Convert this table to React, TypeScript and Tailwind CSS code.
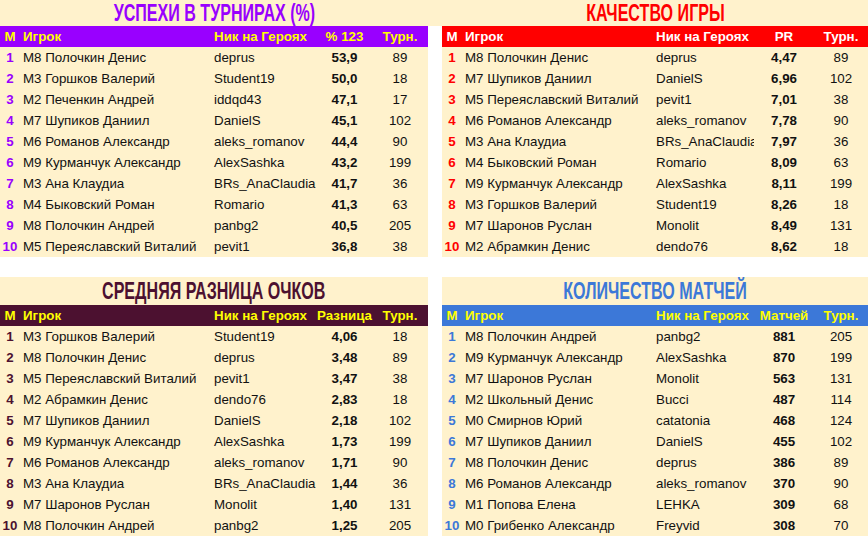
import React from 'react';

type Row = [string, string, string, string];

interface TableDef {
  title: string;
  valueHeader: string;
  titleColor: string;
  headBg: string;
  headText: string;
  rankColor: string;
  cols: string;
  rows: Row[];
}

const LEFT_COLS = 'grid-cols-[20px_191px_106px_55px_56px]';
const RIGHT_COLS = 'grid-cols-[20px_191px_101px_60px_54px]';

const success: TableDef = {
  title: 'УСПЕХИ В ТУРНИРАХ (%)',
  valueHeader: '% 123',
  titleColor: 'text-[#9900ff]',
  headBg: 'bg-[#9900ff]',
  headText: 'text-[#ffff00]',
  rankColor: 'text-[#9900ff]',
  cols: LEFT_COLS,
  rows: [
    ['М8 Полочкин Денис', 'deprus', '53,9', '89'],
    ['М3 Горшков Валерий', 'Student19', '50,0', '18'],
    ['М2 Печенкин Андрей', 'iddqd43', '47,1', '17'],
    ['М7 Шупиков Даниил', 'DanielS', '45,1', '102'],
    ['М6 Романов Александр', 'aleks_romanov', '44,4', '90'],
    ['М9 Курманчук Александр', 'AlexSashka', '43,2', '199'],
    ['М3 Ана Клаудиа', 'BRs_AnaClaudia', '41,7', '36'],
    ['М4 Быковский Роман', 'Romario', '41,3', '63'],
    ['М8 Полочкин Андрей', 'panbg2', '40,5', '205'],
    ['М5 Переяславский Виталий', 'pevit1', '36,8', '38'],
  ],
};

const quality: TableDef = {
  title: 'КАЧЕСТВО ИГРЫ',
  valueHeader: 'PR',
  titleColor: 'text-[#ff0000]',
  headBg: 'bg-[#ff0000]',
  headText: 'text-white',
  rankColor: 'text-[#ff0000]',
  cols: RIGHT_COLS,
  rows: [
    ['М8 Полочкин Денис', 'deprus', '4,47', '89'],
    ['М7 Шупиков Даниил', 'DanielS', '6,96', '102'],
    ['М5 Переяславский Виталий', 'pevit1', '7,01', '38'],
    ['М6 Романов Александр', 'aleks_romanov', '7,78', '90'],
    ['М3 Ана Клаудиа', 'BRs_AnaClaudia', '7,97', '36'],
    ['М4 Быковский Роман', 'Romario', '8,09', '63'],
    ['М9 Курманчук Александр', 'AlexSashka', '8,11', '199'],
    ['М3 Горшков Валерий', 'Student19', '8,26', '18'],
    ['М7 Шаронов Руслан', 'Monolit', '8,49', '131'],
    ['М2 Абрамкин Денис', 'dendo76', '8,62', '18'],
  ],
};

const diff: TableDef = {
  title: 'СРЕДНЯЯ РАЗНИЦА ОЧКОВ',
  valueHeader: 'Разница',
  titleColor: 'text-[#4c1130]',
  headBg: 'bg-[#4c1130]',
  headText: 'text-[#ffff00]',
  rankColor: 'text-[#4c1130]',
  cols: LEFT_COLS,
  rows: [
    ['М3 Горшков Валерий', 'Student19', '4,06', '18'],
    ['М8 Полочкин Денис', 'deprus', '3,48', '89'],
    ['М5 Переяславский Виталий', 'pevit1', '3,47', '38'],
    ['М2 Абрамкин Денис', 'dendo76', '2,83', '18'],
    ['М7 Шупиков Даниил', 'DanielS', '2,18', '102'],
    ['М9 Курманчук Александр', 'AlexSashka', '1,73', '199'],
    ['М6 Романов Александр', 'aleks_romanov', '1,71', '90'],
    ['М3 Ана Клаудиа', 'BRs_AnaClaudia', '1,44', '36'],
    ['М7 Шаронов Руслан', 'Monolit', '1,40', '131'],
    ['М8 Полочкин Андрей', 'panbg2', '1,25', '205'],
  ],
};

const matches: TableDef = {
  title: 'КОЛИЧЕСТВО МАТЧЕЙ',
  valueHeader: 'Матчей',
  titleColor: 'text-[#3c78d8]',
  headBg: 'bg-[#3c78d8]',
  headText: 'text-[#ffff00]',
  rankColor: 'text-[#3c78d8]',
  cols: RIGHT_COLS,
  rows: [
    ['М8 Полочкин Андрей', 'panbg2', '881', '205'],
    ['М9 Курманчук Александр', 'AlexSashka', '870', '199'],
    ['М7 Шаронов Руслан', 'Monolit', '563', '131'],
    ['М2 Школьный Денис', 'Bucci', '487', '114'],
    ['М0 Смирнов Юрий', 'catatonia', '468', '124'],
    ['М7 Шупиков Даниил', 'DanielS', '455', '102'],
    ['М8 Полочкин Денис', 'deprus', '386', '89'],
    ['М6 Романов Александр', 'aleks_romanov', '370', '90'],
    ['М1 Попова Елена', 'LEHKA', '309', '68'],
    ['М0 Грибенко Александр', 'Freyvid', '308', '70'],
  ],
};

// condensed display font for the sheet titles
const Title: React.FC<{ text: string; color: string }> = ({ text, color }) => (
  <div className="flex justify-center">
    <span
      className={`${color} font-bold text-[24px] leading-none scale-x-[0.67] scale-y-[1.02] whitespace-nowrap`}
      style={{ fontFamily: '"Liberation Sans Narrow", "Liberation Sans", Arial, sans-serif' }}
    >
      {text}
    </span>
  </div>
);

const Table: React.FC<{ t: TableDef }> = ({ t }) => (
  <div>
    <div className={`grid ${t.cols} h-[21px] leading-[21px] items-center ${t.headBg} ${t.headText} font-bold`}>
      <div className="text-center">М</div>
      <div className="pl-[3px]">Игрок</div>
      <div className="pl-[3px] whitespace-nowrap">Ник на Героях</div>
      <div className="text-center whitespace-nowrap">{t.valueHeader}</div>
      <div className="text-center">Турн.</div>
    </div>
    {t.rows.map((r, i) => (
      <div key={i} className={`grid ${t.cols} h-[21px] leading-[21px] items-center text-[#111]`}>
        <div className={`text-center font-bold ${t.rankColor}`}>{i + 1}</div>
        <div className="pl-[3px] whitespace-nowrap overflow-hidden">{r[0]}</div>
        <div className="pl-[3px] whitespace-nowrap overflow-hidden">{r[1]}</div>
        <div className="text-center font-bold">{r[2]}</div>
        <div className="text-center">{r[3]}</div>
      </div>
    ))}
  </div>
);

export default function App() {
  return (
    <div
      className="w-[868px] h-[539px] bg-white text-[13.33px] leading-none overflow-hidden"
      style={{ fontFamily: '"Liberation Sans", Arial, sans-serif' }}
    >
      {/* top pair */}
      <div className="grid grid-cols-[428px_426px] gap-x-[14px] bg-[#fff2cc]">
        <div className="h-[26px] flex items-center justify-center">
          <Title text={success.title} color={success.titleColor} />
        </div>
        <div className="h-[26px] flex items-center justify-center">
          <Title text={quality.title} color={quality.titleColor} />
        </div>
      </div>
      <div className="grid grid-cols-[428px_426px] gap-x-[14px]">
        <div className="bg-[#fff2cc]">
          <Table t={success} />
        </div>
        <div className="bg-[#fff2cc]">
          <Table t={quality} />
        </div>
      </div>

      {/* bottom pair */}
      <div className="grid grid-cols-[428px_426px] gap-x-[14px] mt-[20px]">
        <div className="bg-[#fff2cc]">
          <div className="h-[28px] flex items-center justify-center">
            <Title text={diff.title} color={diff.titleColor} />
          </div>
          <Table t={diff} />
        </div>
        <div className="bg-[#fff2cc]">
          <div className="h-[28px] flex items-center justify-center">
            <Title text={matches.title} color={matches.titleColor} />
          </div>
          <Table t={matches} />
        </div>
      </div>
    </div>
  );
}
